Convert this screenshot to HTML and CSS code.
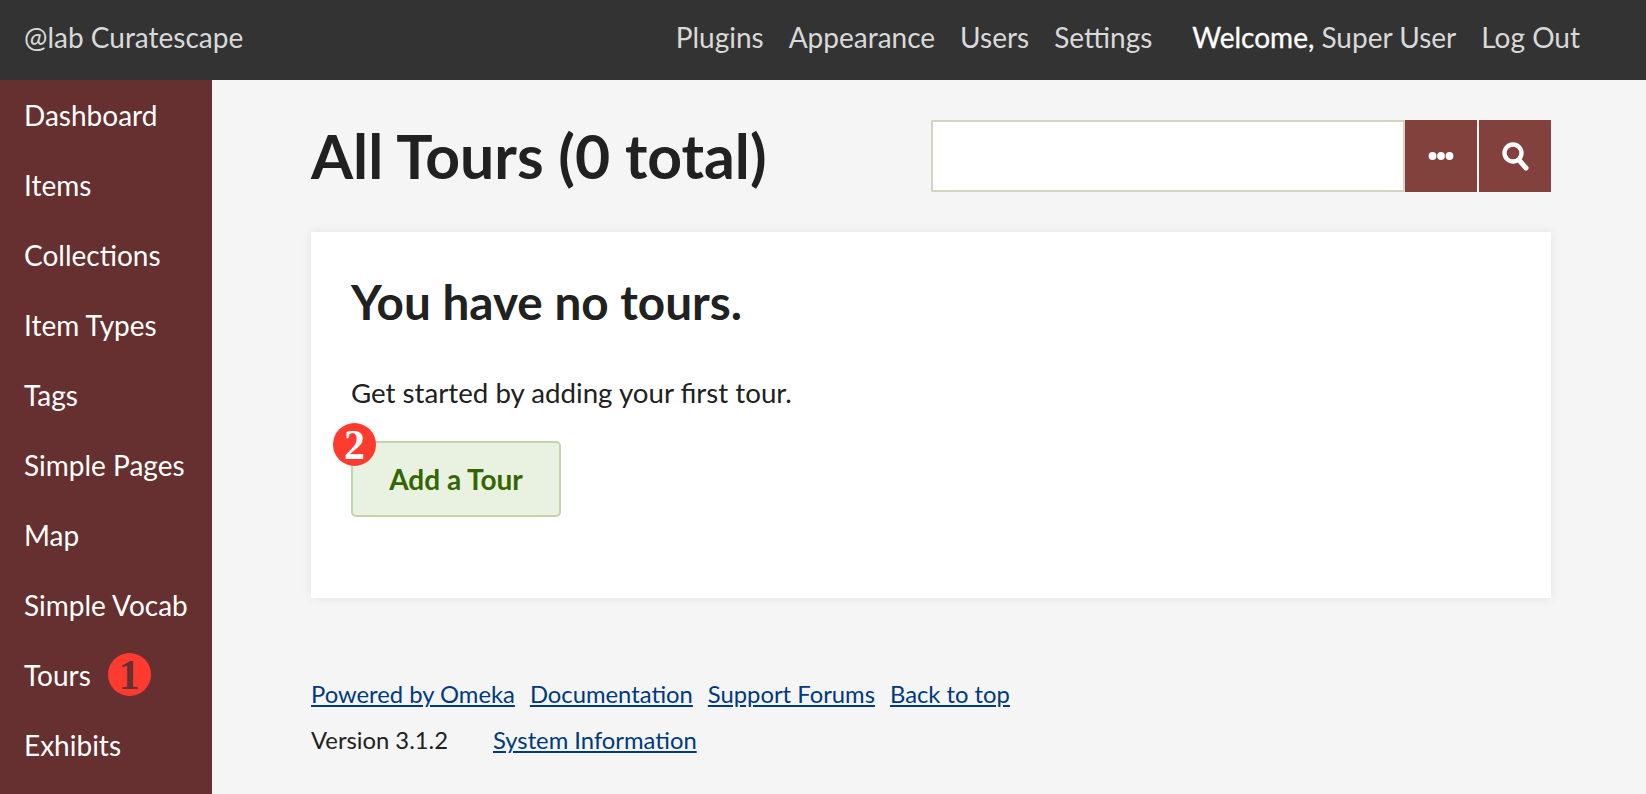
FILE: index.html
```html
<!DOCTYPE html>
<html lang="en">
<head>
<meta charset="utf-8">
<title>All Tours</title>
<link rel="stylesheet" href="styles.css">
</head>
<body>
<header class="topbar">
  <a class="site" href="#">@lab Curatescape</a>
  <nav class="topnav">
    <a href="#">Plugins</a>
    <a href="#">Appearance</a>
    <a href="#">Users</a>
    <a href="#">Settings</a>
  </nav>
  <div class="user"><strong>Welcome,</strong> <a href="#">Super User</a></div>
  <a class="logout" href="#">Log Out</a>
</header>
<div class="shell">
  <aside class="sidebar">
    <a href="#">Dashboard</a>
    <a href="#">Items</a>
    <a href="#">Collections</a>
    <a href="#">Item Types</a>
    <a href="#">Tags</a>
    <a href="#">Simple Pages</a>
    <a href="#">Map</a>
    <a href="#">Simple Vocab</a>
    <a href="#" class="with-badge">Tours<span class="badge badge-one">1</span></a>
    <a href="#">Exhibits</a>
  </aside>
  <main class="main">
    <div class="title-row">
      <h1>All Tours (0 total)</h1>
      <form class="search">
        <input class="search-input" type="text" aria-label="Search">
        <button class="search-btn" type="button" aria-label="Options">
          <svg width="26" height="10" viewBox="0 0 26 10"><circle cx="4.5" cy="5" r="3.9" fill="#fff"/><circle cx="13" cy="5" r="3.9" fill="#fff"/><circle cx="21.5" cy="5" r="3.9" fill="#fff"/></svg>
        </button>
        <button class="search-btn" type="button" aria-label="Search">
          <svg width="28" height="30" viewBox="0 0 28 30"><circle cx="12" cy="12" r="8.5" fill="none" stroke="#fff" stroke-width="4.4"/><path d="M18 19l7 8" stroke="#fff" stroke-width="5" stroke-linecap="round"/></svg>
        </button>
      </form>
    </div>
    <section class="card">
      <h2>You have no tours.</h2>
      <p>Get started by adding your first tour.</p>
      <div class="action">
        <span class="badge badge-two">2</span>
        <a class="add" href="#">Add a Tour</a>
      </div>
    </section>
    <footer class="foot">
      <div class="foot-row">
        <a href="#">Powered by Omeka</a>
        <a href="#">Documentation</a>
        <a href="#">Support Forums</a>
        <a href="#">Back to top</a>
      </div>
      <div class="foot-row foot-second">
        <span>Version 3.1.2</span>
        <a href="#">System Information</a>
      </div>
    </footer>
  </main>
</div>
</body>
</html>
```
FILE: styles.css
```css
* { box-sizing: border-box; }
html, body { margin: 0; height: 100%; overflow: hidden; }
body { font-family: Lato, sans-serif; background: #f5f5f5; color: #212121; }
a { text-decoration: none; color: inherit; }

.topbar { height: 80px; background: #333; color: #d9d9d9; display: flex; align-items: center; padding: 0 66px 6px 24px; font-size: 28px; }
.site { margin-right: auto; }
.topnav { display: flex; gap: 25px; margin-right: 40px; }
.user strong { color: #fff; font-weight: 400; -webkit-text-stroke: 0.3px #fff; }
.logout { margin-left: 25px; }

.shell { display: flex; height: 714px; }
.sidebar { width: 212px; background: #663030; display: flex; flex-direction: column; }
.sidebar a { height: 70px; display: flex; align-items: center; padding: 0 24px 1px; color: #fff; font-size: 28px; flex: none; }

.main { width: 1240px; margin-left: 99px; }
.title-row { display: flex; justify-content: space-between; align-items: center; height: 152px; }
h1 { margin: 0; font-size: 60.7px; font-weight: 700; line-height: 1; color: #212121; }
.search { display: flex; width: 620px; height: 72px; }
.search-input { flex: 1; min-width: 0; border: 2px solid #d4d4bf; background: #fff; padding: 0; }
.search-btn { width: 72px; border: 0; padding: 0; background: #82413c; display: flex; align-items: center; justify-content: center; }
.search-btn + .search-btn { margin-left: 2px; }

.card { background: #fff; height: 366px; padding: 39px 40px; box-shadow: 0 0 10px rgba(0,0,0,.08); }
h2 { margin: 0; font-size: 47.7px; line-height: 62px; font-weight: 700; }
.card p { margin: 40px 0 0; font-size: 27.7px; line-height: 40px; }
.action { position: relative; margin-top: 28px; }
.add { display: inline-flex; align-items: center; justify-content: center; width: 210px; height: 76px; background: #e9f2e1; border: 2px solid #bfd7a8; border-radius: 5px; color: #336600; font-size: 28px; font-weight: 700; }
.badge { display: inline-flex; align-items: center; justify-content: center; width: 43px; height: 43px; border-radius: 50%; background: #ff3b30; font-family: "Liberation Serif", serif; font-weight: 700; font-size: 42px; line-height: 1; }
.badge-one { color: #663030; margin-left: 17px; }
.badge-two { color: #fff; position: absolute; left: -18px; top: -18px; }

.foot { margin-top: 81px; font-size: 23.8px; }
.foot-row { display: flex; gap: 15px; line-height: 30px; }
.foot-row a { color: #003a7e; text-decoration: underline; }
.foot-second { margin-top: 16px; gap: 45px; }
```
